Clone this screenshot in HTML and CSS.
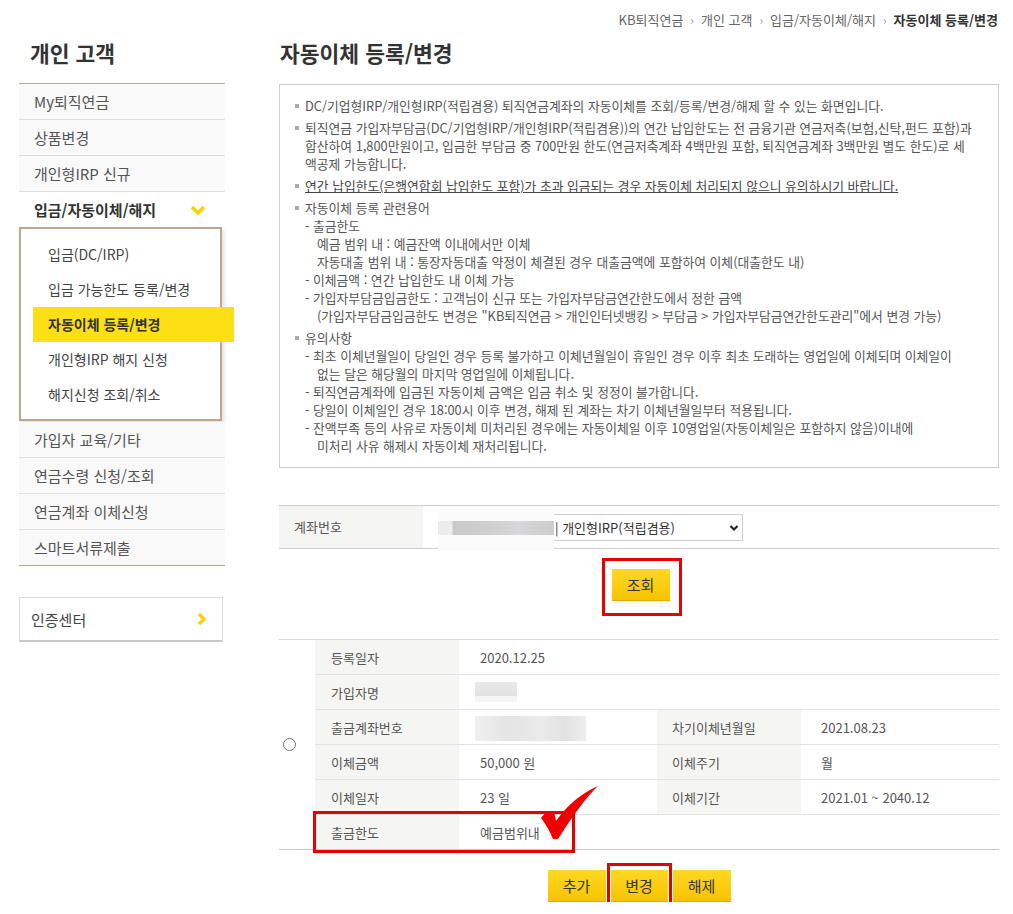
FILE: index.html
```html
<!DOCTYPE html>
<html lang="ko">
<head>
<meta charset="utf-8">
<title>자동이체 등록/변경</title>
<link rel="stylesheet" href="styles.css">
</head>
<body>
<div class="breadcrumb">
  <span>KB퇴직연금</span><span class="sep">›</span><span>개인 고객</span><span class="sep">›</span><span>입금/자동이체/해지</span><span class="sep">›</span><strong>자동이체 등록/변경</strong>
</div>
<div class="page">
  <aside class="lnb">
    <h2 class="lnb-title">개인 고객</h2>
    <ul class="menu">
      <li class="menu-item"><a>My퇴직연금</a></li>
      <li class="menu-item"><a>상품변경</a></li>
      <li class="menu-item"><a>개인형IRP 신규</a></li>
      <li class="menu-item is-open">
        <a>입금/자동이체/해지
          <svg class="chev-down" width="16" height="10" viewBox="0 0 16 10"><polyline points="2,2 8,8 14,2" fill="none" stroke="#fbcf00" stroke-width="3.4"/></svg>
        </a>
        <ul class="submenu">
          <li><a>입금(DC/IRP)</a></li>
          <li><a>입금 가능한도 등록/변경</a></li>
          <li class="current"><a>자동이체 등록/변경</a></li>
          <li><a>개인형IRP 해지 신청</a></li>
          <li><a>해지신청 조회/취소</a></li>
        </ul>
      </li>
      <li class="menu-item"><a>가입자 교육/기타</a></li>
      <li class="menu-item"><a>연금수령 신청/조회</a></li>
      <li class="menu-item"><a>연금계좌 이체신청</a></li>
      <li class="menu-item last"><a>스마트서류제출</a></li>
    </ul>
    <a class="cert">인증센터
      <svg class="chev-right" width="10" height="14" viewBox="0 0 10 14"><polyline points="2,2 7,7 2,12" fill="none" stroke="#fbcf00" stroke-width="3.2"/></svg>
    </a>
  </aside>

  <main class="content">
    <h1 class="page-title">자동이체 등록/변경</h1>

    <div class="info-box">
      <ul class="info-list">
        <li>DC/기업형IRP/개인형IRP(적립겸용) 퇴직연금계좌의 자동이체를 조회/등록/변경/해제 할 수 있는 화면입니다.</li>
        <li>퇴직연금 가입자부담금(DC/기업형IRP/개인형IRP(적립겸용))의 연간 납입한도는 전 금융기관 연금저축(보험,신탁,펀드 포함)과<br>합산하여 1,800만원이고, 입금한 부담금 중 700만원 한도(연금저축계좌 4백만원 포함, 퇴직연금계좌 3백만원 별도 한도)로 세<br>액공제 가능합니다.</li>
        <li><u>연간 납입한도(은행연합회 납입한도 포함)가 초과 입금되는 경우 자동이체 처리되지 않으니 유의하시기 바랍니다.</u></li>
        <li>자동이체 등록 관련용어
          <div class="dash">- 출금한도</div>
          <div class="sub">예금 범위 내 : 예금잔액 이내에서만 이체</div>
          <div class="sub">자동대출 범위 내 : 통장자동대출 약정이 체결된 경우 대출금액에 포함하여 이체(대출한도 내)</div>
          <div class="dash">- 이체금액 : 연간 납입한도 내 이체 가능</div>
          <div class="dash">- 가입자부담금입금한도 : 고객님이 신규 또는 가입자부담금연간한도에서 정한 금액</div>
          <div class="sub">(가입자부담금입금한도 변경은 "KB퇴직연금 &gt; 개인인터넷뱅킹 &gt; 부담금 &gt; 가입자부담금연간한도관리"에서 변경 가능)</div>
        </li>
        <li>유의사항
          <div class="dash">- 최초 이체년월일이 당일인 경우 등록 불가하고 이체년월일이 휴일인 경우 이후 최초 도래하는 영업일에 이체되며 이체일이</div>
          <div class="sub">없는 달은 해당월의 마지막 영업일에 이체됩니다.</div>
          <div class="dash">- 퇴직연금계좌에 입금된 자동이체 금액은 입금 취소 및 정정이 불가합니다.</div>
          <div class="dash">- 당일이 이체일인 경우 18:00시 이후 변경, 해제 된 계좌는 차기 이체년월일부터 적용됩니다.</div>
          <div class="dash">- 잔액부족 등의 사유로 자동이체 미처리된 경우에는 자동이체일 이후 10영업일(자동이체일은 포함하지 않음)이내에</div>
          <div class="sub">미처리 사유 해제시 자동이체 재처리됩니다.</div>
        </li>
      </ul>
    </div>

    <div class="account-row">
      <div class="account-label">계좌번호</div>
      <div class="account-field">
        <div class="blur-acct"><span class="blur-bar"></span></div>
        <div class="select-wrap">
          <select class="acct-select"><option>| 개인형IRP(적립겸용)</option></select>
          <svg class="select-chev" width="10" height="8" viewBox="0 0 10 8"><polyline points="1.5,2 5,5.5 8.5,2" fill="none" stroke="#222" stroke-width="2.2"/></svg>
        </div>
      </div>
    </div>

    <div class="btn-row search-row">
      <span class="red-mark mark-search"><button class="btn">조회</button></span>
    </div>

    <div class="result">
      <table class="result-table">
        <colgroup><col class="c-radio"><col class="c-th"><col class="c-td"><col class="c-th"><col class="c-td"></colgroup>
        <tr>
          <td class="radio-cell" rowspan="6"><input type="radio" name="sel"></td>
          <th>등록일자</th><td colspan="3">2020.12.25</td>
        </tr>
        <tr><th>가입자명</th><td colspan="3"><span class="blur-name"></span></td></tr>
        <tr><th>출금계좌번호</th><td><span class="blur-no"></span></td><th>차기이체년월일</th><td>2021.08.23</td></tr>
        <tr><th>이체금액</th><td>50,000 원</td><th>이체주기</th><td>월</td></tr>
        <tr><th>이체일자</th><td>23 일</td><th>이체기간</th><td>2021.01 ~ 2040.12</td></tr>
        <tr class="last-row"><th>출금한도</th><td colspan="3">예금범위내</td></tr>
      </table>
      <div class="row-mark"></div>
      <svg class="check" width="64" height="60" viewBox="0 0 64 60"><path d="M3,35 Q8,28 14,28 Q17,30 18,38 Q35,14 60,3 Q44,18 20,56 L15,56 Q10,44 3,35 Z" fill="#f00000"/></svg>
    </div>

    <div class="btn-row action-row">
      <button class="btn">추가</button>
      <span class="red-mark mark-edit"><button class="btn">변경</button></span>
      <button class="btn">해제</button>
    </div>
  </main>
</div>
</body>
</html>
```

FILE: styles.css
```css
* { box-sizing: border-box; }
html, body { margin: 0; padding: 0; background: #fff; }
body {
  font-family: "Noto Sans CJK KR", "Noto Sans", sans-serif;
  color: #555;
  font-size: 12px;
}
ul { list-style: none; margin: 0; padding: 0; }
a { display: block; text-decoration: none; color: inherit; cursor: pointer; }

/* breadcrumb */
.breadcrumb {
  height: 40px;
  line-height: 40px;
  text-align: right;
  padding-right: 15px;
  font-size: 13px;
  color: #666;
}
.breadcrumb .sep { color: #999; margin: 0 7px; font-size: 12px; }
.breadcrumb strong { color: #333; font-weight: 700; }

.page {
  display: flex;
  gap: 54px;
  padding-left: 19px;
}

/* left nav */
.lnb { width: 206px; flex: none; }
.lnb-title, .page-title {
  margin: 0;
  font-size: 21.5px;
  line-height: 26px;
  font-weight: 700;
  color: #333;
}
.lnb-title { padding-left: 11px; margin-bottom: 17px; }
.menu { border-top: 1px solid #b7aa98; }
.menu-item > a {
  height: 36px;
  line-height: 35px;
  padding-left: 15px;
  font-size: 15px;
  color: #555;
  background: #f9f9f9;
  border-bottom: 1px solid #dedede;
  position: relative;
}
.menu-item.last > a { border-bottom-color: #b7a58d; }
.menu-item.is-open > a {
  background: #fff;
  font-weight: 700;
  color: #333;
  border-bottom: none;
  height: 35px;
  display: flex;
  align-items: center;
  justify-content: space-between;
  padding-right: 19px;
}
.chev-down { display: block; }
.submenu {
  width: 203px;
  border: 2px solid #bba892;
  background: #fff;
  padding: 8px 0 7px;
  margin-bottom: 1px;
  box-shadow: 2px 3px 4px rgba(0,0,0,0.12);
}
.submenu li a {
  width: 201px;
  margin-left: 12px;
  height: 35px;
  line-height: 35px;
  padding-left: 15px;
  font-size: 14px;
  color: #444;
}
.submenu li.current a {
  background: #fddf16;
  font-weight: 700;
  color: #333;
}
.cert {
  margin-top: 31px;
  width: 204px;
  height: 45px;
  border: 1px solid #ddd;
  border-bottom: 2px solid #c9c9c9;
  padding: 0 15px 0 11px;
  font-size: 15px;
  color: #444;
  display: flex;
  align-items: center;
  justify-content: space-between;
}

/* main */
.content { width: 720px; flex: none; }
.page-title { margin-bottom: 18px; padding-left: 1px; }

.info-box {
  border: 1px solid #cfcfcf;
  padding: 12px 10px 12px 25px;
  font-size: 12.8px;
  line-height: 18px;
  color: #555;
  white-space: nowrap;
}
.info-list > li { position: relative; margin-top: 4px; }
.info-list > li:first-child { margin-top: 0; }
.info-list > li::before {
  content: "";
  position: absolute;
  left: -10px;
  top: 7px;
  width: 4px;
  height: 4px;
  background: #aaa;
}
.info-list u { color: #444; text-decoration-color: #444; }
.sub { padding-left: 12px; }

/* account row */
.account-row {
  margin-top: 37px;
  display: flex;
  border-top: 1px solid #cdcdcd;
  border-bottom: 1px solid #cdcdcd;
  height: 44px;
}
.account-label {
  width: 144px;
  background: #f5f5f3;
  padding-left: 15px;
  line-height: 42px;
  font-size: 13px;
  color: #555;
}
.account-field {
  display: flex;
  align-items: center;
  padding-left: 15px;
}
.blur-acct {
  width: 116px;
  height: 44px;
  background: #fbfbfb;
  display: flex;
  align-items: center;
  margin-top: 1px;
}
.blur-bar {
  display: block;
  width: 100%;
  height: 14px;
  background: linear-gradient(90deg, #ececec 0, #ececec 12%, #c9c9c9 13%, #cfcfcf 45%, #d7d7d9 70%, #cdcdcd 100%);
}
.select-wrap { position: relative; }
.acct-select {
  appearance: none;
  -webkit-appearance: none;
  width: 189px;
  height: 27px;
  border: 1px solid #cfcfcf;
  border-left: none;
  background: #fff;
  font-family: inherit;
  font-size: 13px;
  color: #333;
  padding: 0 0 0 1px;
  border-radius: 0;
}
.select-chev { position: absolute; right: 4px; top: 10px; pointer-events: none; }

/* buttons */
.btn-row { display: flex; justify-content: center; gap: 5px; }
.search-row { margin-top: 20px; padding-left: 3px; }
.btn {
  width: 58px;
  height: 32px;
  border: none;
  border-bottom: 1px solid #e9a900;
  background: linear-gradient(#fed824, #f7c300);
  font-family: inherit;
  font-size: 15px;
  color: #333;
  padding: 0;
  cursor: pointer;
}
.red-mark { position: relative; display: block; }
.red-mark .btn { display: block; }
.red-mark::after {
  content: "";
  position: absolute;
  border: 3px solid #e60000;
  pointer-events: none;
}
.mark-search::after { left: -10px; right: -12px; top: -11px; bottom: -15px; }
.mark-edit::after { left: -4px; right: -4px; top: -7px; bottom: -7px; }
.mark-edit .btn { width: 57px; }

/* result table */
.result { position: relative; margin-top: 38px; }
.result-table {
  width: 720px;
  border-collapse: collapse;
  table-layout: fixed;
  border-top: 1px solid #dadada;
  border-bottom: 1px solid #c6c6c6;
}
.c-radio { width: 36px; }
.c-th { width: 144px; }
.c-td { width: 198px; }
.result-table th, .result-table td {
  height: 35px;
  padding: 0;
  font-size: 13px;
  font-weight: 400;
  color: #555;
  text-align: left;
  border-bottom: 1px solid #e2e2e2;
  vertical-align: middle;
}
.result-table th { background: #f5f5f3; padding-left: 16px; }
.result-table td { padding-left: 21px; }
.result-table th + td + th { padding-left: 15px; }
.result-table th + td + th + td { padding-left: 20px; }
.result-table .last-row th, .result-table .last-row td { border-bottom: none; }
.result-table td.radio-cell { padding: 0 0 0 4px; border-bottom: none; }
.radio-cell input { margin: 0; width: 13px; height: 13px; display: block; }
.blur-name {
  display: block;
  width: 42px;
  height: 20px;
  margin-left: -5px;
  background: linear-gradient(#e9e9e9 0, #e2e2e2 70%, #f5f5f5 70%);
}
.blur-no {
  display: block;
  width: 111px;
  height: 25px;
  margin-left: -5px;
  margin-top: 3px;
  background: linear-gradient(90deg, #f0f0f0, #e4e4e4 30%, #ebebeb 60%, #e2e2e2 80%, #eeeeee);
}
.row-mark {
  position: absolute;
  left: 34px;
  top: 172px;
  width: 262px;
  height: 42px;
  border: 3px solid #e60000;
}
.check { position: absolute; left: 259px; top: 144px; }

.action-row { margin-top: 20px; }
```
